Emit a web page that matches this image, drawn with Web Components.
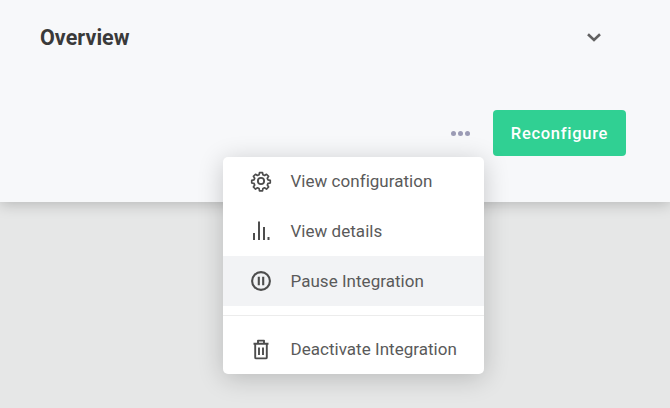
<!DOCTYPE html>
<html><head><meta charset="utf-8"><style>
html,body{margin:0;padding:0;background:#e6e7e7;height:408px;overflow:hidden;font-family:Roboto,sans-serif}
</style></head><body>
<template id="t-page"><style>
:host{display:block;position:relative;width:670px;height:408px;overflow:hidden;background:#e6e7e7;font-family:Roboto,sans-serif}
</style><slot></slot></template>
<template id="t-panel"><style>
:host{display:flex;flex-direction:column;box-sizing:border-box;height:202px;padding:24px 44px 46px 40px;background:#f7f8fa;box-shadow:0 2px 14px rgba(0,0,0,.22)}
.top{display:flex;justify-content:space-between;align-items:center;height:26px}
h1{margin:0;padding-top:2px;font:700 21.5px/26px Roboto,sans-serif;color:#3a3a3a;letter-spacing:.05px}
.chev{display:block;margin-right:25px}
.bottom{margin-top:auto;display:flex;justify-content:flex-end;align-items:center;gap:23px}
</style><div class="top"><h1><slot name="title"></slot></h1>
<svg class="chev" width="14" height="9" viewBox="0 0 14 9" fill="none"><path d="M1 1.3 7 7l6-5.7" stroke="#616161" stroke-width="2.6"/></svg></div>
<div class="bottom"><slot></slot></div></template>
<template id="t-dots"><style>
:host{display:flex;gap:2.2px}
i{width:5px;height:5px;border-radius:50%;background:#9b9bb5}
</style><i></i><i></i><i></i></template>
<template id="t-btn"><style>
:host{display:flex;align-items:center;justify-content:center;box-sizing:border-box;width:133px;height:46px;background:#30d093;border-radius:4px;color:#fff;font:500 16.5px Roboto,sans-serif;letter-spacing:.72px}
</style><slot></slot></template>
<template id="t-menu"><style>
:host{display:flex;flex-direction:column;position:absolute;left:223px;top:157px;width:261px;background:#fff;border-radius:5px;box-shadow:0 4px 26px rgba(0,0,0,.2)}
</style><slot></slot></template>
<template id="t-item"><style>
:host{display:flex;align-items:center;gap:18.5px;height:50px;padding-left:27px;color:#5a5a5a;font:400 17px Roboto,sans-serif;letter-spacing:.03px}
:host(:first-child){height:48.4px;margin-bottom:.6px}
:host(:last-child){height:49px}
:host([active]){background:#f2f3f5;height:49.6px}
.ic{width:22px;height:22px;display:flex;color:#4d4d4d}
</style><span class="ic"><slot name="icon"></slot></span><span><slot></slot></span></template>
<template id="t-div"><style>
:host{display:block;height:1px;margin:9.4px 0 9px;background:#ececec}
</style></template>

<ui-page>
<ui-panel><span slot="title">Overview</span>
<ui-dots></ui-dots><ui-button>Reconfigure</ui-button></ui-panel>
<ui-menu>
<ui-item><svg slot="icon" width="22" height="22" viewBox="0 0 24 24" fill="none" stroke="currentColor" stroke-width="2" stroke-linejoin="round"><circle cx="12" cy="12" r="3.4"/><path d="M10.2 2.2h3.6l.5 2.7 1.9.8 2.3-1.5 2.5 2.5-1.5 2.3.8 1.9 2.7.5v3.2l-2.7.5-.8 1.9 1.5 2.3-2.5 2.5-2.3-1.5-1.9.8-.5 2.7h-3.6l-.5-2.7-1.9-.8-2.3 1.5-2.5-2.5 1.5-2.3-.8-1.9-2.7-.5v-3.2l2.7-.5.8-1.9-1.5-2.3 2.5-2.5 2.3 1.5 1.9-.8z" transform="translate(12 12) scale(.92) translate(-12 -12.2)"/></svg>View configuration</ui-item>
<ui-item><svg slot="icon" width="22" height="22" viewBox="0 0 22 22" fill="none" stroke="currentColor" stroke-width="2"><path d="M4 20v-7M9 20V1.5M14 20V7M18.5 20v-3"/></svg>View details</ui-item>
<ui-item active><svg slot="icon" width="22" height="22" viewBox="0 0 22 22" fill="none" stroke="currentColor" stroke-width="2.1"><circle cx="11" cy="11" r="8.9"/><path d="M8.8 6.8v8.4M13.2 6.8v8.4"/></svg>Pause Integration</ui-item>
<ui-divider></ui-divider>
<ui-item><svg slot="icon" width="22" height="22" viewBox="0 0 22 22" fill="none" stroke="currentColor" stroke-width="1.9" stroke-linejoin="round"><path d="M3.5 5.8h15M8 5.8V2.6h6v3.2M5.2 5.8v13.6a1 1 0 0 0 1 1h9.6a1 1 0 0 0 1-1V5.8M9 9.5v7.5M13 9.5v7.5"/></svg>Deactivate Integration</ui-item>
</ui-menu>
</ui-page>
<script>
for(const [tag,id] of [['ui-page','t-page'],['ui-panel','t-panel'],['ui-dots','t-dots'],['ui-button','t-btn'],['ui-menu','t-menu'],['ui-item','t-item'],['ui-divider','t-div']]){
customElements.define(tag,class extends HTMLElement{constructor(){super();this.attachShadow({mode:'open'}).appendChild(document.getElementById(id).content.cloneNode(true));}});
}
</script>
</body></html>
